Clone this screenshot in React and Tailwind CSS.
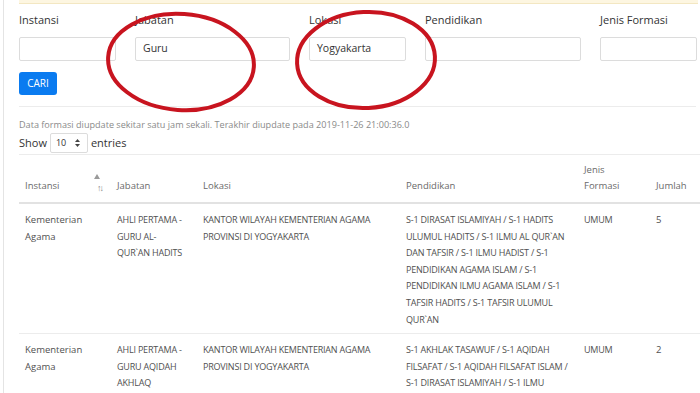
import React from 'react';

// Filter fields shown above the table
const filters = [
  { label: "Instansi", value: "", width: "w-[97px]" },
  { label: "Jabatan", value: "Guru", width: "w-[155px]" },
  { label: "Lokasi", value: "Yogyakarta", width: "w-[97px]" },
  { label: "Pendidikan", value: "", width: "w-[156px]" },
  { label: "Jenis Formasi", value: "", width: "w-[97px]" },
];

const rows = [
  {
    instansi: ["Kementerian", "Agama"],
    jabatan: ["AHLI PERTAMA -", "GURU AL-", "QUR`AN HADITS"],
    lokasi: ["KANTOR WILAYAH KEMENTERIAN AGAMA", "PROVINSI DI YOGYAKARTA"],
    pendidikan: [
      "S-1 DIRASAT ISLAMIYAH / S-1 HADITS",
      "ULUMUL HADITS / S-1 ILMU AL QUR`AN",
      "DAN TAFSIR / S-1 ILMU HADIST / S-1",
      "PENDIDIKAN AGAMA ISLAM / S-1",
      "PENDIDIKAN ILMU AGAMA ISLAM / S-1",
      "TAFSIR HADITS / S-1 TAFSIR ULUMUL",
      "QUR`AN",
    ],
    jenis: "UMUM",
    jumlah: "5",
  },
  {
    instansi: ["Kementerian", "Agama"],
    jabatan: ["AHLI PERTAMA -", "GURU AQIDAH", "AKHLAQ"],
    lokasi: ["KANTOR WILAYAH KEMENTERIAN AGAMA", "PROVINSI DI YOGYAKARTA"],
    pendidikan: [
      "S-1 AKHLAK TASAWUF / S-1 AQIDAH",
      "FILSAFAT / S-1 AQIDAH FILSAFAT ISLAM /",
      "S-1 DIRASAT ISLAMIYAH / S-1 ILMU",
    ],
    jenis: "UMUM",
    jumlah: "2",
  },
];

const Lines = ({ items }) => (
  <>
    {items.map((t, i) => (
      <div key={i} className="whitespace-nowrap">{t}</div>
    ))}
  </>
);

// uppercase cells run a bit narrower than the lowercase ones
const upper = "px-[6px] pb-[5px] pt-[8px] text-[9px] tracking-[-0.2px]";
const head = "px-[6px] pb-[8px] pt-[7px] font-normal leading-4";

const App = () => {
  return (
    <div
      className="relative h-[393px] w-[700px] overflow-hidden bg-white pl-[3px]"
      style={{ fontFamily: '"Open Sans", "Noto Sans", sans-serif' }}
    >
      <div className="h-full border-l border-[#e4e4e4] pl-[15px]">
        {/* bottom edge of the alert box above */}
        <div className="h-[4px] w-[679px] border-b border-[#f3e7c2] bg-[#fdf6e1]" />

        {/* filter form */}
        <div className="mt-[8px] flex gap-[19px]">
          {filters.map((f) => (
            <div key={f.label} className={f.width}>
              <div className="text-[11px] leading-4 text-[#333]">{f.label}</div>
              <div className="mt-[9px] flex h-[24px] items-center rounded-[2px] border border-[#dcdcdc] px-[7px] text-[10.5px] text-[#333]">
                {f.value}
              </div>
            </div>
          ))}
        </div>

        <button className="mt-[11px] h-[23px] w-[38px] rounded-[3px] bg-[#0a7bf0] text-[10px] text-white">
          CARI
        </button>

        <div className="mt-[11px] w-[677px] border-t border-[#ececec]" />

        <div className="mt-[11px] text-[9.1px] leading-[14px] text-[#8a8a8a]">
          Data formasi diupdate sekitar satu jam sekali. Terakhir diupdate pada 2019-11-26 21:00:36.0
        </div>

        <div className="mt-[1px] flex items-center gap-[3px] text-[11px] text-[#333]">
          <span>Show</span>
          <div className="flex h-[20px] w-[38px] items-center justify-between rounded-[2px] border border-[#dcdcdc] pl-[5px] pr-[7px] text-[9px]">
            <span>10</span>
            <svg width="5" height="8" viewBox="0 0 5 8" fill="#444">
              <path d="M2.5 0 L5 3 H0 Z" />
              <path d="M2.5 8 L5 5 H0 Z" />
            </svg>
          </div>
          <span>entries</span>
        </div>

        {/* data table */}
        <table className="mt-[1px] w-[681px] table-fixed border-collapse border-t border-[#ececec] text-left">
          <colgroup>
            <col className="w-[92px]" />
            <col className="w-[86px]" />
            <col className="w-[203px]" />
            <col className="w-[178px]" />
            <col className="w-[72px]" />
            <col />
          </colgroup>
          <thead>
            <tr className="border-b-2 border-[#e2e2e2] align-bottom text-[9.5px] font-normal text-[#6a6a6a]">
              <th className={`relative ${head}`}>
                Instansi
                <span className="absolute right-[11px] top-[19px] h-0 w-0 border-x-[3px] border-b-[5px] border-x-transparent border-b-[#9a9a9a]" />
                <span className="absolute right-[9px] bottom-[10px] text-[9px] leading-none tracking-[-2px] text-[#8a8a8a]">↑↓</span>
              </th>
              <th className={head}>Jabatan</th>
              <th className={head}>Lokasi</th>
              <th className={head}>Pendidikan</th>
              <th className={head}>
                Jenis
                <br />
                Formasi
              </th>
              <th className={head}>Jumlah</th>
            </tr>
          </thead>
          <tbody>
            {rows.map((r, i) => (
              <tr key={i} className="border-b border-[#ececec] align-top text-[9.5px] leading-[16.6px] text-[#505050]">
                <td className="px-[6px] pb-[5px] pt-[8px]"><Lines items={r.instansi} /></td>
                <td className={upper}><Lines items={r.jabatan} /></td>
                <td className={upper}><Lines items={r.lokasi} /></td>
                <td className={upper}><Lines items={r.pendidikan} /></td>
                <td className={upper}>{r.jenis}</td>
                <td className="px-[6px] pb-[5px] pt-[8px]">{r.jumlah}</td>
              </tr>
            ))}
          </tbody>
        </table>
      </div>

      {/* red hand-drawn circles over the screenshot */}
      <svg className="pointer-events-none absolute left-0 top-0" width="700" height="393">
        <ellipse cx="181" cy="62" rx="73" ry="48" fill="none" stroke="#c8141f" strokeWidth="4" transform="rotate(4 181 62)" />
        <ellipse cx="366" cy="60" rx="69" ry="48" fill="none" stroke="#c8141f" strokeWidth="4" transform="rotate(-3 366 60)" />
      </svg>
    </div>
  );
};

export default App;
